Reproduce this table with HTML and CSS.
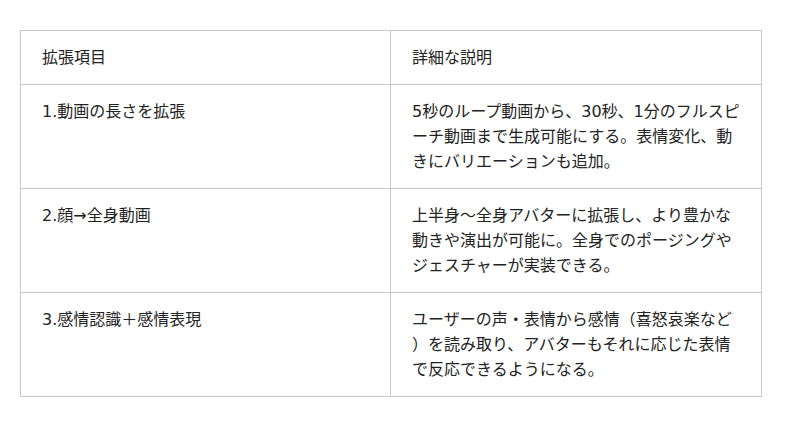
FILE: index.html
```html
<!DOCTYPE html>
<html lang="ja">
<head>
<meta charset="utf-8">
<link rel="stylesheet" href="styles.css">
</head>
<body>
<div class="wrap">
<table class="spec">
<thead>
<tr><th class="col-a">拡張項目</th><th class="col-b">詳細な説明</th></tr>
</thead>
<tbody>
<tr><td class="col-a">1.動画の長さを拡張</td><td class="col-b">5秒のループ動画から、30秒、1分のフルスピーチ動画まで生成可能にする。表情変化、動きにバリエーションも追加。</td></tr>
<tr><td class="col-a">2.顔→全身動画</td><td class="col-b">上半身〜全身アバターに拡張し、より豊かな動きや演出が可能に。全身でのポージングやジェスチャーが実装できる。</td></tr>
<tr><td class="col-a">3.感情認識＋感情表現</td><td class="col-b">ユーザーの声・表情から感情（喜怒哀楽など）を読み取り、アバターもそれに応じた表情で反応できるようになる。</td></tr>
</tbody>
</table>
</div>
</body>
</html>
```
FILE: styles.css
```css
html, body { margin: 0; padding: 0; background: #fff; }
.wrap { padding: 30px 39px 0 20px; }
.spec {
  border-collapse: collapse;
  width: 742px;
  table-layout: fixed;
  font-family: "DejaVu Sans", "Noto Sans CJK JP", sans-serif;
  font-size: 16px;
  line-height: 25px;
  color: #222;
  border: 1px solid #dedede;
  text-spacing-trim: space-all;
}
.spec th, .spec td {
  text-align: left;
  font-weight: normal;
  vertical-align: top;
  padding: 14px 21px;
  border: 1px solid #c8c8c8;
}
.spec .col-a { width: 327px; }
.spec .col-b { line-break: anywhere; }
```
